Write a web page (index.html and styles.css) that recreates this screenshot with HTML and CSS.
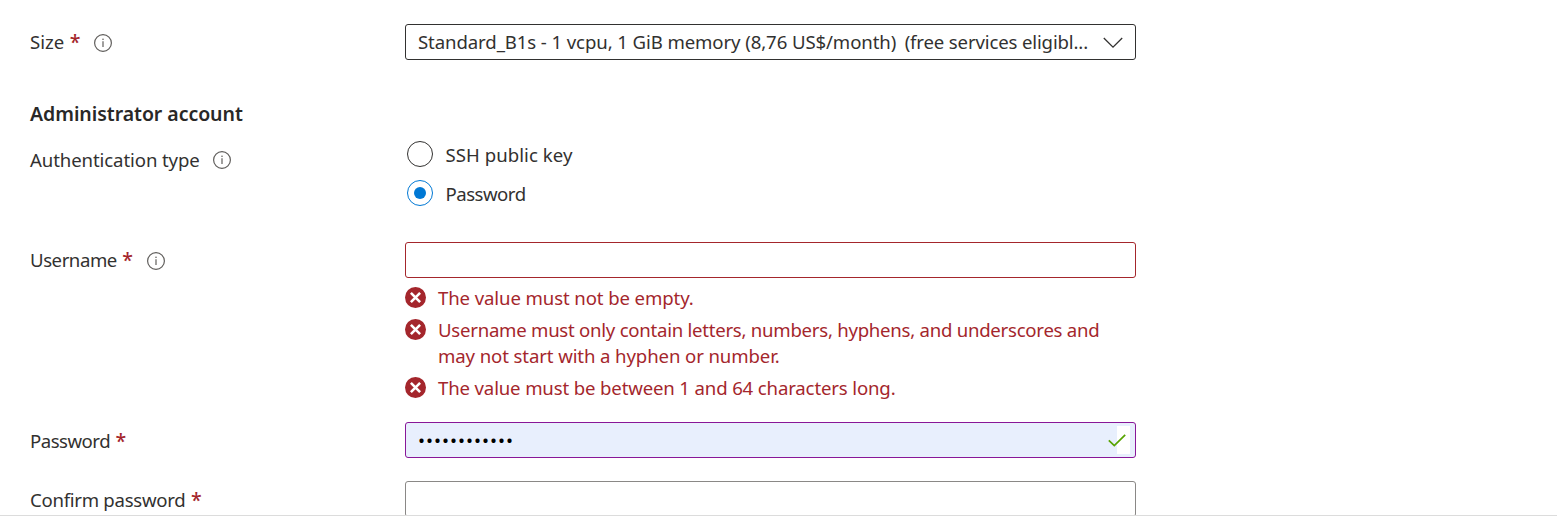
FILE: index.html
```html
<!DOCTYPE html>
<html lang="en">
<head>
<meta charset="utf-8">
<title>Create a virtual machine</title>
<link rel="stylesheet" href="styles.css">
</head>
<body>
<svg class="defs" width="0" height="0" aria-hidden="true">
  <symbol id="info" viewBox="0 0 18 18"><circle cx="9" cy="9" r="8.4" fill="none" stroke="#605e5c" stroke-width="1.2"/><path d="M9 7.3v5.7" stroke="#605e5c" stroke-width="1.2"/><circle cx="9" cy="5.3" r=".8" fill="#605e5c"/></symbol>
  <symbol id="error" viewBox="0 0 21 21"><circle cx="10.5" cy="10.5" r="10.5" fill="#a4262c"/><path d="M5.9 5.9l9.2 9.2M15.1 5.9l-9.2 9.2" stroke="#fff" stroke-width="2.6"/></symbol>
</svg>
<main class="form">
  <div class="row row-size">
    <div class="label"><span class="t-size">Size</span><span class="req">*</span><svg class="info"><use href="#info"/></svg></div>
    <div class="box select"><span class="value"><span class="t-sel1">Standard_B1s - 1 vcpu, 1 GiB memory (8,76 US$/month)</span><span class="t-sel2">(free services eligibl...</span></span>
      <svg class="chevron" viewBox="0 0 20 12"><path d="M.8 1L10 10.2 19.2 1" fill="none" stroke="#323130" stroke-width="1.3"/></svg></div>
  </div>
  <h2 class="heading"><span class="t-head">Administrator account</span></h2>
  <div class="row row-auth">
    <div class="label"><span class="t-auth low">Authentication type</span><svg class="info"><use href="#info"/></svg></div>
    <div class="radios">
      <div class="option"><span class="radio"></span><span class="t-ssh low">SSH public key</span></div>
      <div class="option"><span class="radio checked"></span><span class="t-pass low">Password</span></div>
    </div>
  </div>
  <div class="row row-user">
    <div class="label"><span class="t-user">Username</span><span class="req">*</span><svg class="info"><use href="#info"/></svg></div>
    <div>
      <div class="box invalid"></div>
      <ul class="errors">
        <li><svg class="error-icon"><use href="#error"/></svg><p><span class="t-e1">The value must not be empty.</span></p></li>
        <li><svg class="error-icon"><use href="#error"/></svg><p><span class="t-e2">Username must only contain letters, numbers, hyphens, and underscores and</span><br><span class="t-e3">may not start with a hyphen or number.</span></p></li>
        <li><svg class="error-icon"><use href="#error"/></svg><p><span class="t-e4">The value must be between 1 and 64 characters long.</span></p></li>
      </ul>
    </div>
  </div>
  <div class="row row-pass">
    <div class="label"><span class="t-pass low">Password</span><span class="req low">*</span></div>
    <div class="box filled"><span class="dots">••••••••••••</span>
      <span class="valid"><svg class="check" viewBox="0 0 18 13"><path d="M.8 6.3L6.3 11.6 17.2 .9" fill="none" stroke="#57a300" stroke-width="1.7"/></svg></span></div>
  </div>
  <div class="row row-confirm">
    <div class="label"><span class="t-conf low">Confirm password</span><span class="req low">*</span></div>
    <div class="box"></div>
  </div>
</main>
</body>
</html>
```
FILE: styles.css
```css
* { box-sizing: border-box; }
body { margin: 0; background: #fff; color: #323130; font: 18.6px/26px "Noto Sans", "Open Sans", sans-serif; }
.defs { position: absolute; }
.form { height: 516px; padding: 24px 0 0 30px; overflow: hidden; border-bottom: 1px solid #dcdcdc; }
.row { display: grid; grid-template-columns: 375px 731px; align-items: start; }
.label { display: flex; align-items: center; height: 36px; white-space: nowrap; }
.low { padding-top: 2px; }
.req { width: 10px; margin-left: 5.5px; color: #a4262c; font-weight: 500; font-size: 19.5px; }
.info { width: 18px; height: 18px; margin: 1px 0 0 14.5px; }
.box { display: flex; align-items: center; justify-content: space-between; height: 36px; border: 1px solid #8a8886; border-radius: 3px; padding: 0 12px; white-space: nowrap; }
.select { border-color: #323130; }
.value { display: flex; gap: 8.5px; }
.chevron { width: 20px; height: 12px; margin-top: 1px; }
.heading { margin: 41px 0 0; height: 25px; font-size: 19.5px; line-height: 26px; font-weight: 600; color: #292827; }
.row-auth { margin-top: 15px; }
.row-auth .info { margin-left: 13px; }
.radios { display: grid; gap: 13px; padding-left: 2px; }
.option { display: flex; align-items: center; gap: 12.5px; height: 26px; }
.radio { width: 26px; height: 26px; border: 1px solid #323130; border-radius: 50%; }
.checked { display: grid; place-items: center; border-color: #0078d4; }
.checked::after { content: ""; width: 12px; height: 12px; border-radius: 50%; background: #0078d4; }
.row-user { margin-top: 36px; }
.invalid { border-color: #a4262c; }
.errors { display: grid; gap: 6px; margin: 7px 0 0; padding: 0; list-style: none; color: #a4262c; white-space: nowrap; }
.errors li { display: flex; gap: 12px; }
.errors p { margin: 0; }
.error-icon { width: 21px; height: 21px; margin-top: 2px; }
.row-pass { margin-top: 21px; }
.filled { border-color: #881798; background: #e8effd; padding-right: 5px; color: #000; }
.dots { letter-spacing: 1.01px; }
.valid { display: flex; align-items: center; width: 22px; height: 28px; background: linear-gradient(90deg, transparent 9px, #fff 9px); }
.check { width: 18px; height: 13px; }
.row-confirm { margin-top: 23px; }

/* Per-string tracking */
.t-head { letter-spacing: -.05px; }
.t-sel1 { letter-spacing: -.1px; }
.t-sel2 { letter-spacing: -.15px; }
.t-auth { letter-spacing: -.1px; }
.t-ssh { letter-spacing: .05px; }
.t-pass { letter-spacing: -.5px; }
.t-user { letter-spacing: -.45px; }
.t-conf { letter-spacing: -.28px; }
.t-e1, .t-e3 { letter-spacing: -.11px; }
.t-e2 { letter-spacing: -.255px; }
.t-e4 { letter-spacing: -.15px; }
```
